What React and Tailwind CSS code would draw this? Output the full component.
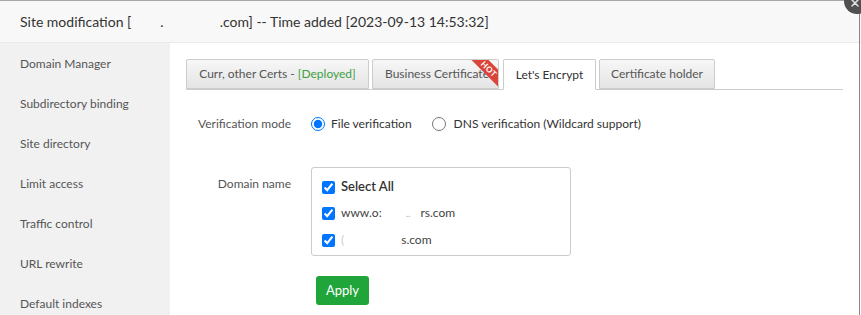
import React from 'react';

const menu = [
  'Domain Manager',
  'Subdirectory binding',
  'Site directory',
  'Limit access',
  'Traffic control',
  'URL rewrite',
  'Default indexes',
];

function Tab({ children, active, hot, className = '' }) {
  if (active) {
    return (
      <div className={`h-[31px] justify-center flex items-center whitespace-nowrap border border-[#ccc] border-b-white bg-white rounded-t-[2px] -mb-px text-[#333] ${className}`}>
        {children}
      </div>
    );
  }
  return (
    <div className={`relative overflow-hidden h-[30px] flex items-center whitespace-nowrap border border-[#ccc] rounded-t-[2px] bg-gradient-to-b from-[#f7f7f7] to-[#e4e4e4] text-[#555] ${className}`}>
      {children}
      {hot && (
        <div className="absolute -right-[15px] top-[3px] w-[48px] h-[12px] bg-[#d9453a] rotate-45 flex items-center justify-center text-[8px] leading-none font-bold text-white tracking-[0.5px]">
          HOT
        </div>
      )}
    </div>
  );
}

export default function App() {
  return (
    <div className="relative w-[861px] h-[315px] overflow-hidden bg-white text-[12px] text-[#333] font-['Lato',sans-serif] whitespace-nowrap">
      {/* close button, mostly off-screen */}
      <div className="absolute left-[844px] top-[-12px] w-[26px] h-[26px] rounded-full bg-[#505050] z-10">
        <svg className="absolute left-[7px] top-[11px]" width="8" height="8" viewBox="0 0 8 8">
          <path d="M1 1L7 7M7 1L1 7" stroke="#ddd" strokeWidth="1.6" strokeLinecap="round" />
        </svg>
      </div>
      <div className="absolute left-[859px] top-[14px] bottom-0 w-px bg-[#888]" />

      <div className="h-[43px] border-t border-[#a8a8a8] border-b border-b-[#eaeaea] bg-[#f8f8f8] flex items-center pl-[20px] text-[14px] text-[#333]">
        <span>Site modification [</span>
        <span className="inline-block w-[29px]" />
        <span>.</span>
        <span className="inline-block w-[56px]" />
        <span>.com] -- Time added [2023-09-13 14:53:32]</span>
      </div>

      <div className="flex h-[272px]">
        <div className="w-[170px] shrink-0 bg-[#f1f1f2] pt-[1px]">
          {menu.map(m => (
            <div key={m} className="h-[40px] flex items-center pl-[20px] text-[#555]">
              {m}
            </div>
          ))}
        </div>

        <div className="flex-1 pl-[16px] pt-[16px]">
          <div className="flex items-end gap-[3px] border-b border-[#ccc] w-[657px]">
            <Tab className="w-[183px] justify-center">
              Curr, other Certs -&nbsp;<span className="text-[#3e9f44]">[Deployed]</span>
            </Tab>
            <Tab hot className="w-[127px] pl-[12px]">Business Certificate</Tab>
            <Tab active className="w-[93px] ml-[1px]">Let's Encrypt</Tab>
            <Tab className="w-[116px] justify-center">Certificate holder</Tab>
          </div>

          <div className="flex items-center mt-[20px] h-[28px]">
            <div className="w-[105px] text-right text-[#555]">Verification mode</div>
            <label className="flex items-center ml-[20px]">
              <input type="radio" name="mode" defaultChecked className="w-[14px] h-[14px] m-0 accent-[#0075ff]" />
              <span className="ml-[6px]">File verification</span>
            </label>
            <label className="flex items-center ml-[20px]">
              <input type="radio" name="mode" className="w-[14px] h-[14px] m-0" />
              <span className="ml-[8px]">DNS verification (Wildcard support)</span>
            </label>
          </div>

          <div className="flex mt-[29px]">
            <div className="w-[105px] text-right text-[#555] pt-[8px]">Domain name</div>
            <div className="ml-[20px] w-[260px] h-[89px] border border-[#ccc] rounded-[3px] pl-[10px] pt-[9px]">
              <label className="flex items-center h-[20px]">
                <input type="checkbox" defaultChecked className="w-[13px] h-[13px] m-0 accent-[#0075ff]" />
                <span className="ml-[6px] font-semibold text-[13px] text-[#333]">Select All</span>
              </label>
              <label className="flex items-center h-[20px] mt-[6px]">
                <input type="checkbox" defaultChecked className="w-[13px] h-[13px] m-0 accent-[#0075ff]" />
                <span className="ml-[6px] text-[#444]">www.o:</span>
                <span className="ml-[24px] text-[#aaa] text-[10px]">..</span>
                <span className="ml-[10px] text-[#444]">rs.com</span>
              </label>
              <label className="flex items-center h-[20px] mt-[7px]">
                <input type="checkbox" defaultChecked className="w-[13px] h-[13px] m-0 accent-[#0075ff]" />
                <span className="ml-[6px] text-[#ccc]">(</span>
                <span className="ml-[57px] text-[#444]">s.com</span>
              </label>
            </div>
          </div>

          <button className="mt-[20px] ml-[130px] w-[53px] h-[29px] rounded-[3px] bg-[#20a53a] text-white text-[13px]">
            Apply
          </button>
        </div>
      </div>
    </div>
  );
}
